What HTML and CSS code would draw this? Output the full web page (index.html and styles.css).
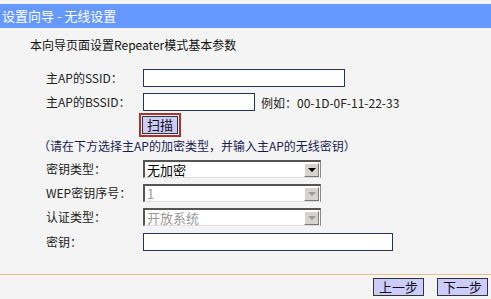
FILE: index.html
```html
<!DOCTYPE html>
<html lang="zh-CN">
<head>
  <meta charset="UTF-8">
  <title>设置向导 - 无线设置</title>
  <link rel="stylesheet" href="styles.css">
</head>
<body>
  <div class="titlebar">设置向导 - 无线设置</div>
  <p class="intro">本向导页面设置Repeater模式基本参数</p>

  <div class="form">
    <div class="row">
      <label for="ssid">主AP的SSID：</label>
      <input type="text" id="ssid" class="txt wide">
    </div>
    <div class="row">
      <label for="bssid">主AP的BSSID：</label>
      <div class="inline">
        <input type="text" id="bssid" class="txt short">
        <span class="hint">例如：00-1D-0F-11-22-33</span>
      </div>
    </div>
    <div class="row scan-row">
      <span></span>
      <div><button class="btn scan">扫描</button></div>
    </div>

    <p class="note">（请在下方选择主AP的加密类型，并输入主AP的无线密钥）</p>

    <div class="row sel-row">
      <label>密钥类型：</label>
      <div class="sel"><span class="sel-val">无加密</span><span class="arrow"></span></div>
    </div>
    <div class="row sel-row">
      <label>WEP密钥序号：</label>
      <div class="sel disabled"><span class="sel-val">1</span><span class="arrow"></span></div>
    </div>
    <div class="row sel-row">
      <label>认证类型：</label>
      <div class="sel disabled"><span class="sel-val">开放系统</span><span class="arrow"></span></div>
    </div>
    <div class="row key-row">
      <label for="key">密钥：</label>
      <input type="text" id="key" class="txt key">
    </div>
  </div>

  <div class="footer">
    <button class="btn step">上一步</button>
    <button class="btn step">下一步</button>
  </div>
</body>
</html>
```

FILE: styles.css
```css
body {
  margin: 0;
  padding-top: 4px;
  background: #f4f4f4;
  font-family: "Noto Sans CJK SC", "DejaVu Sans", sans-serif;
  font-size: 12px;
  color: #222;
}
.titlebar {
  height: 24px;
  line-height: 24px;
  background: #6699ff;
  color: #fff;
  font-size: 13px;
  padding-left: 2px;
}
.intro {
  margin: 9px 0 0;
  padding-left: 30px;
  height: 16px;
  line-height: 16px;
  color: #111;
}
.form {
  padding-left: 46px;
  padding-top: 16px;
}
.row {
  display: grid;
  grid-template-columns: 97px auto;
  align-items: center;
  height: 18px;
  margin-bottom: 6px;
}
.row label {
  line-height: 18px;
  color: #222;
}
.inline {
  display: flex;
  align-items: center;
}
.txt {
  box-sizing: border-box;
  height: 18px;
  margin: 0;
  padding: 0 3px;
  border: 1px solid #243454;
  background: #fff;
  font: inherit;
}
.wide { width: 202px; }
.short { width: 112px; }
.key { width: 250px; }
.hint {
  margin-left: 6px;
  color: #222;
}
.scan-row {
  margin-top: -1px;
  margin-bottom: 4px;
}
.btn {
  box-sizing: border-box;
  margin: 0;
  padding: 0;
  height: 18px;
  border: 1px solid #333;
  background: #ccccff;
  font: inherit;
  font-size: 13px;
  line-height: 14px;
  color: #111;
  cursor: pointer;
}
.scan {
  width: 36px;
  margin-left: -1px;
  outline: 2px solid #a83232;
  outline-offset: 1px;
}
.note {
  margin: 0 0 6px -8px;
  height: 16px;
  line-height: 16px;
  color: #1c1c55;
}
.sel {
  box-sizing: border-box;
  width: 178px;
  height: 18px;
  display: flex;
  align-items: center;
  justify-content: space-between;
  background: #fff;
  border-top: 2px solid #555;
  border-left: 2px solid #555;
  border-right: 1px solid #888;
  border-bottom: 1px solid #ddd;
}
.sel-val {
  padding-left: 2px;
  font-size: 13px;
  line-height: 15px;
  color: #000;
}
.arrow {
  box-sizing: border-box;
  width: 15px;
  height: 14px;
  margin-right: 1px;
  background: #d6d3cc;
  border-top: 1px solid #fff;
  border-left: 1px solid #fff;
  border-right: 1px solid #777;
  border-bottom: 1px solid #777;
  display: flex;
  align-items: center;
  justify-content: center;
}
.arrow::after {
  content: "";
  border-left: 4px solid transparent;
  border-right: 4px solid transparent;
  border-top: 4px solid #000;
}
.disabled .sel-val { color: #999; }
.disabled .arrow::after { border-top-color: #999; }
.key-row { margin-top: 7px; }
.footer {
  margin-top: 23px;
  border-top: 1px solid #e6c08c;
  padding: 3px 3px 0 0;
  display: flex;
  justify-content: flex-end;
  gap: 13px;
}
.step {
  width: 51px;
  height: 18px;
}
```
